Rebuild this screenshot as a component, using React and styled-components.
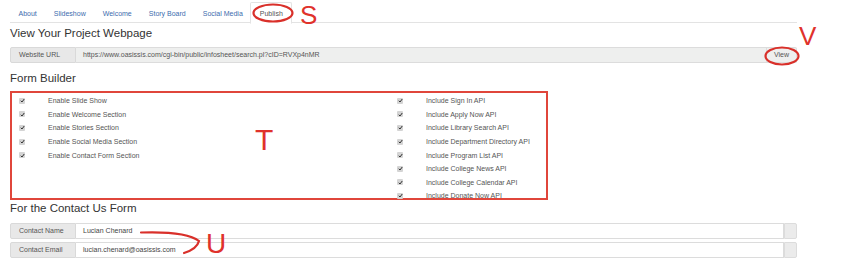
import React from 'react';
import styled, { createGlobalStyle } from 'styled-components';

const Global = createGlobalStyle`
  body {
    margin: 0;
    background: #fff;
    font-family: "Liberation Sans", Arial, sans-serif;
    color: #555;
  }
`;

const Page = styled.div`
  position: relative;
  width: 850px;
  height: 259px;
  overflow: hidden;
`;

const Container = styled.div`
  width: 787px;
  padding-left: 10px;
`;

const Tabs = styled.ul`
  display: flex;
  margin: 0;
  padding: 2px 0 0;
  list-style: none;
  border-bottom: 1px solid #e3e3e3;
  height: 20px;
`;

const Tab = styled.li`
  padding: 0 8.5px;
  height: 20px;
  line-height: 22px;
  font-size: 7px;
  color: ${p => (p.active ? '#555' : '#3d6cae')};
  border: 1px solid ${p => (p.active ? '#e3e3e3' : 'transparent')};
  border-bottom-color: ${p => (p.active ? '#fff' : 'transparent')};
  border-radius: 2px 2px 0 0;
  margin: 0 -1px 0 -1px;
  background: ${p => (p.active ? '#fff' : 'transparent')};
`;

const Heading = styled.h3`
  margin: ${p => p.mt || 0}px 0 0;
  font-size: 11.5px;
  line-height: 13px;
  font-weight: normal;
  color: #333;
`;

const Group = styled.div`
  display: flex;
  height: 16px;
  margin-top: ${p => p.mt || 0}px;
  font-size: 7px;
  line-height: 14px;
`;

const Addon = styled.div`
  width: 66px;
  box-sizing: border-box;
  padding-left: 8px;
  background: #e8e8e8;
  border: 1px solid #d9d9d9;
  border-radius: 2px 0 0 2px;
  color: #555;
`;

const Field = styled.div`
  flex: 1;
  padding-left: 7px;
  background: ${p => (p.readOnly ? '#eeefee' : '#fff')};
  border: 1px solid #dcdcdc;
  border-left: none;
  color: ${p => (p.readOnly ? '#555' : '#444')};
  white-space: nowrap;
`;

const SideButton = styled.div`
  width: ${p => p.w}px;
  box-sizing: border-box;
  text-align: center;
  background: ${p => (p.flat ? '#eeefee' : '#ebebeb')};
  border: 1px solid #dcdcdc;
  border-left: ${p => (p.flat ? 'none' : '1px solid #dcdcdc')};
  border-radius: 0 2px 2px 0;
  color: #555;
`;

const Builder = styled.div`
  display: grid;
  grid-template-columns: 378px 1fr;
  width: 538px;
  height: 109px;
  box-sizing: border-box;
  margin-top: 6px;
  padding: 1px 0 0 7px;
  border: 2px solid #e0463b;
`;

const Column = styled.div`
  display: flex;
  flex-direction: column;
`;

const Check = styled.label`
  display: flex;
  align-items: center;
  height: 13.6px;
  font-size: 7px;
  color: #555;
`;

const Box = styled.span`
  display: inline-flex;
  align-items: center;
  justify-content: center;
  width: 6px;
  height: 6px;
  margin-right: 23px;
  background: #d4d4d4;
  border-radius: 1px;
`;

const Annotations = styled.div`
  position: absolute;
  inset: 0;
  pointer-events: none;
`;

const Letter = styled.span`
  position: absolute;
  left: ${p => p.x}px;
  top: ${p => p.y}px;
  font-size: ${p => p.size}px;
  line-height: 1;
  color: #e0322b;
  font-family: "Liberation Sans", Arial, sans-serif;
`;

const left = [
  'Enable Slide Show',
  'Enable Welcome Section',
  'Enable Stories Section',
  'Enable Social Media Section',
  'Enable Contact Form Section',
];

const right = [
  'Include Sign In API',
  'Include Apply Now API',
  'Include Library Search API',
  'Include Department Directory API',
  'Include Program List API',
  'Include College News API',
  'Include College Calendar API',
  'Include Donate Now API',
];

const Tick = () => (
  <Box>
    <svg width="5" height="5" viewBox="0 0 10 10">
      <path d="M1.5 5.5 L4 8 L8.5 2" fill="none" stroke="#333" strokeWidth="2" />
    </svg>
  </Box>
);

export default function App() {
  return (
    <Page>
      <Global />
      <Container>
        <Tabs>
          {['About', 'Slideshow', 'Welcome', 'Story Board', 'Social Media', 'Publish'].map(t => (
            <Tab key={t} active={t === 'Publish'}>{t}</Tab>
          ))}
        </Tabs>

        <Heading mt={4}>View Your Project Webpage</Heading>
        <Group mt={7}>
          <Addon>Website URL</Addon>
          <Field readOnly>https://www.oasissis.com/cgi-bin/public/infosheet/search.pl?cID=RVXp4nMR</Field>
          <SideButton w={30} flat>View</SideButton>
        </Group>

        <Heading mt={9}>Form Builder</Heading>
        <Builder>
          <Column>
            {left.map(l => (
              <Check key={l}><Tick />{l}</Check>
            ))}
          </Column>
          <Column>
            {right.map(l => (
              <Check key={l}><Tick />{l}</Check>
            ))}
          </Column>
        </Builder>

        <Heading mt={2}>For the Contact Us Form</Heading>
        <Group mt={8}>
          <Addon>Contact Name</Addon>
          <Field>Lucian Chenard</Field>
          <SideButton w={13} />
        </Group>
        <Group mt={3}>
          <Addon>Contact Email</Addon>
          <Field>lucian.chenard@oasissis.com</Field>
          <SideButton w={13} />
        </Group>
      </Container>

      <Annotations>
        <svg width="850" height="259">
          <ellipse cx="273" cy="13" rx="19.5" ry="8.5" fill="none" stroke="#d9302a" strokeWidth="2.2" />
          <ellipse cx="782" cy="56" rx="16.5" ry="8.5" fill="none" stroke="#d9302a" strokeWidth="2.2" />
          <path d="M141 232.5 Q186 231 199 241 Q197 249 184 253" fill="none" stroke="#d9302a" strokeWidth="2.2" strokeLinecap="round" />
        </svg>
        <Letter x={300} y={2} size={26}>S</Letter>
        <Letter x={799} y={23} size={26}>V</Letter>
        <Letter x={255} y={125} size={30}>T</Letter>
        <Letter x={206} y={230} size={28}>U</Letter>
      </Annotations>
    </Page>
  );
}
